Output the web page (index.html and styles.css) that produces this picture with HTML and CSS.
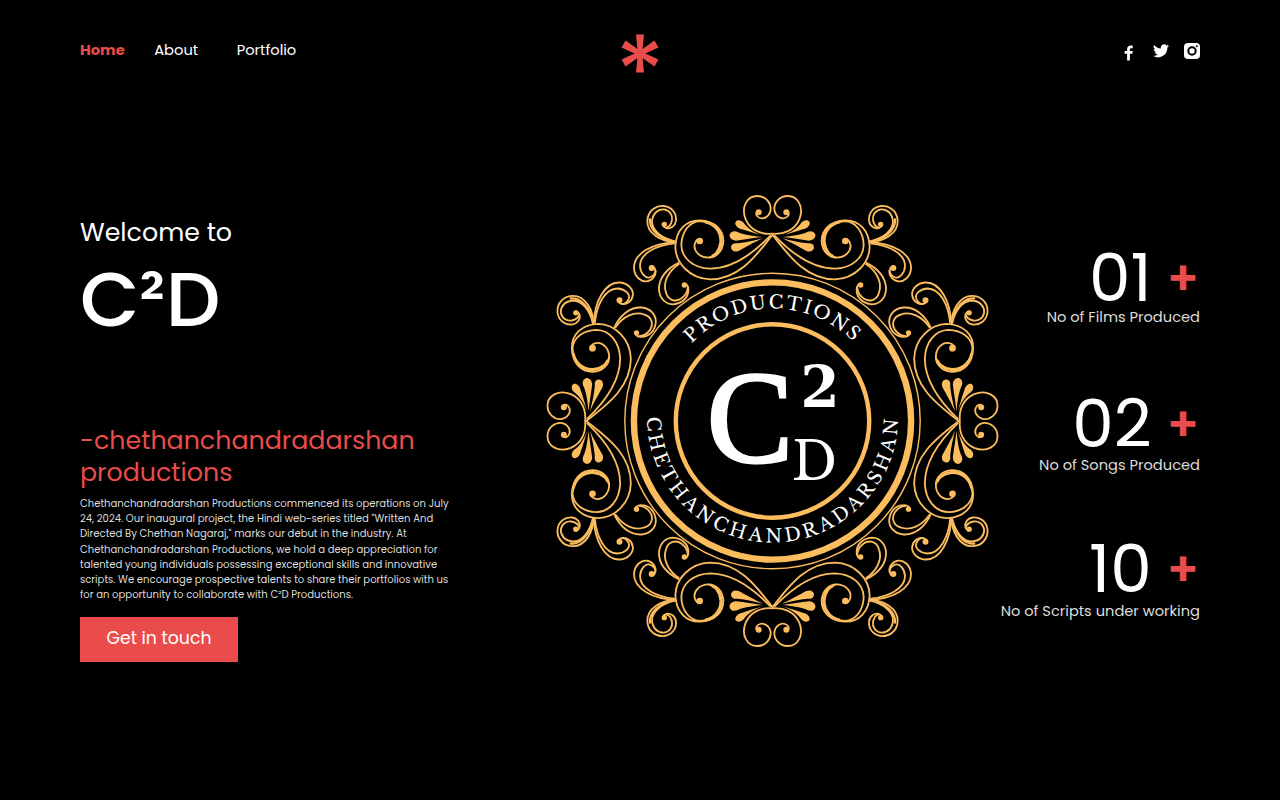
FILE: index.html
```html
<!DOCTYPE html>
<html lang="en">
<head>
<meta charset="utf-8">
<title>C²D Productions</title>
<link rel="stylesheet" href="styles.css">
</head>
<body>
<header class="header">
  <nav class="nav">
    <a class="nav-link active">Home</a>
    <a class="nav-link">About</a>
    <a class="nav-link">Portfolio</a>
  </nav>
  <svg class="mark" viewBox="0 0 38 40" width="38" height="40">
    <g fill="#ea4c4c" transform="translate(19 19.500)">
      <path id="ray" d="M-4-19H4L2.200 0H-2.200Z"/>
      <use href="#ray" transform="rotate(60)"/><use href="#ray" transform="rotate(120)"/>
      <use href="#ray" transform="rotate(180)"/><use href="#ray" transform="rotate(240)"/>
      <use href="#ray" transform="rotate(300)"/>
    </g>
  </svg>
  <div class="social">
    <svg class="facebook" width="10" height="16" viewBox="0 0 10 16"><path fill="#fff" d="M3.100 15.600V8.800H.6V6h2.500V4.200C3.100 1.800 4.600.6 6.800.6c.8 0 1.500.1 1.900.2v2.500H7.300c-1.200 0-1.400.6-1.400 1.400V6h2.800l-.4 2.800H5.900v6.800z"/></svg>
    <svg width="16" height="14" viewBox="0 0 24 20"><path fill="#fff" d="M24 2.400a10 10 0 0 1-2.800.8A5 5 0 0 0 23.300.4a10 10 0 0 1-3.100 1.200 4.900 4.900 0 0 0-8.400 4.500A14 14 0 0 1 1.700.9a4.900 4.900 0 0 0 1.500 6.600A5 5 0 0 1 1 6.900a4.900 4.900 0 0 0 3.900 4.900 5 5 0 0 1-2.200.1 4.900 4.900 0 0 0 4.600 3.400A9.900 9.900 0 0 1 0 17.300 14 14 0 0 0 21.500 4.900 10 10 0 0 0 24 2.400z"/></svg>
    <svg width="16" height="16" viewBox="0 0 16 16"><rect width="16" height="16" rx="4" fill="#fff"/><circle cx="8" cy="8" r="3.700" fill="none" stroke="#000" stroke-width="2"/><circle cx="12.800" cy="3.200" r="1" fill="#000"/></svg>
  </div>
</header>
<main class="hero">
  <section class="intro">
    <p class="welcome">Welcome to</p>
    <h1 class="title">C²D</h1>
    <h2 class="company">-chethanchandradarshan<br>productions</h2>
    <p class="about">Chethanchandradarshan Productions commenced its operations on July<br>24, 2024. Our inaugural project, the Hindi web-series titled "Written And<br>Directed By Chethan Nagaraj," marks our debut in the industry. At<br>Chethanchandradarshan Productions, we hold a deep appreciation for<br>talented young individuals possessing exceptional skills and innovative<br>scripts. We encourage prospective talents to share their portfolios with us<br>for an opportunity to collaborate with C²D Productions.</p>
    <a class="button">Get in touch</a>
  </section>
  <svg class="emblem" viewBox="540 185 465 470" width="465" height="470">
    <defs>
      <g id="scroll" fill="none" stroke="#fbbd5e" stroke-width="5.500" transform="scale(.33333) translate(-427.500 -693)">
        <path d="M428 131C395 134 362 122 347 88C332 50 352 18 382 18C408 18 423 40 422 58C420 78 402 88 390 84C378 80 376 70 382 64"/>
        <path d="M428 134C390 180 335 268 240 268C180 266 137 220 136 170C138 120 168 90 210 91C255 93 281 120 280 155C278 185 257 203 236 203C208 203 190 182 194 163C197 150 204 146 210 149"/>
        <path d="M422 136C380 180 315 236 240 236C190 234 155 205 154 165C155 125 178 95 210 93C248 97 272 122 271 155C268 183 252 200 236 203"/>
        <path stroke-width="7" d="M225 96C258 103 275 125 275 153C273 175 262 192 245 198"/>
        <path d="M140 155C95 158 50 130 52 92C54 60 80 46 102 48C126 51 140 70 138 92C136 108 122 118 108 114C98 110 96 103 102 99"/>
        <path d="M135 154C95 145 66 122 66 94C68 70 84 57 102 58C120 61 128 76 126 90C123 105 115 112 108 113"/>
        <path stroke-width="7" stroke-linecap="round" d="M60 88C58 112 78 136 112 150"/>
        <path d="M138 157C70 158 10 190 12 235C14 262 35 276 50 274C68 272 80 255 76 240C74 230 65 228 62 231"/>
        <path d="M134 160C80 165 30 190 30 228C31 250 46 266 60 262C70 258 77 250 76 240"/>
        <path d="M148 218C110 235 85 265 87 300C90 330 110 343 130 343C155 341 175 325 175 300C176 287 168 280 162 284"/>
        <path d="M148 221C112 245 98 280 108 308C115 332 138 337 155 325C168 315 173 305 173 292"/>
        <g stroke="none" fill="#fbbd5e">
          <circle cx="386" cy="67" r="9"/><circle cx="209" cy="153" r="10"/><circle cx="103" cy="103" r="8"/><circle cx="65" cy="234" r="9"/><circle cx="163" cy="285" r="8"/>
          <path d="M400 138C375 130 353 124 337 118C320 115 313 102 317 95C323 88 334 90 341 98C350 112 370 127 400 138Z"/>
          <path d="M398 141C370 144 342 149 318 152C303 151 297 141 299 133C304 122 315 122 323 126C345 136 370 138 398 141Z"/>
          <path d="M400 145C375 155 345 173 326 183C313 188 303 181 303 172C303 162 313 158 322 160C348 158 375 151 400 145Z"/>
        </g>
      </g>
      <g id="pair"><use href="#scroll"/><use href="#scroll" transform="scale(-1 1)"/></g>
      <path id="arc-top" d="M691.500 343.500A113 113 0 0 1 855 343.500"/>
      <path id="arc-bottom" d="M647 417A125.500 125.500 0 0 0 898 417"/>
    </defs>
    <g transform="translate(772.500 421)">
      <use href="#pair"/><use href="#pair" transform="rotate(90)"/><use href="#pair" transform="rotate(180)"/><use href="#pair" transform="rotate(270)"/>
      <g stroke="#fbbd5e" fill="none"><circle r="147.700" stroke-width="1.400"/><circle r="138.600" stroke-width="6.400"/><circle r="96.700" stroke-width="4.400"/></g>
    </g>
    <g class="emblem-text">
      <text font-size="18.500"><textPath href="#arc-top" textLength="180">PRODUCTIONS</textPath></text>
      <text font-size="18.500"><textPath href="#arc-bottom" textLength="392">CHETHANCHANDRADARSHAN</textPath></text>
      <text class="emblem-initial" x="707" y="462" font-size="131" textLength="86" lengthAdjust="spacingAndGlyphs">C</text>
      <text class="emblem-digit" x="800.500" y="407" font-size="57" textLength="39" lengthAdjust="spacingAndGlyphs">2</text>
      <text x="792" y="480" font-size="54" textLength="45" lengthAdjust="spacingAndGlyphs">D</text>
    </g>
  </svg>
  <section class="stats">
    <div class="stat"><div class="figure">01<b>+</b></div><p>No of Films Produced</p></div>
    <div class="stat"><div class="figure">02<b>+</b></div><p>No of Songs Produced</p></div>
    <div class="stat"><div class="figure">10<b>+</b></div><p>No of Scripts under working</p></div>
  </section>
</main>
</body>
</html>
```
FILE: styles.css
```css
* { box-sizing: border-box; margin: 0; padding: 0; }
body { width: 1280px; height: 800px; overflow: hidden; background: #000; color: #fff; font-family: Poppins, Inter, sans-serif; }
.header { display: grid; grid-template-columns: 1fr 38px 1fr; padding: 34px 80px 0; height: 104px; }
.nav { display: flex; padding-top: 4px; font-size: 14.700px; line-height: 24px; }
.nav-link:nth-child(2) { margin-left: 29.500px; }
.nav-link:nth-child(3) { margin-left: 38.500px; }
.active { color: #ea4c4c; font-weight: 700; }
.social { display: flex; justify-content: flex-end; align-items: center; height: 34px; gap: 15px; padding-right: .5px; }
.facebook { position: relative; top: 2px; margin-right: 4px; }
.hero { display: flex; padding: 81px 80px 0; }
.intro { width: 460px; padding-top: 28px; }
.welcome { font-size: 25.300px; line-height: 38px; }
.title { margin-top: 3px; font-size: 77px; line-height: 90px; font-weight: 500; }
.company { margin-top: 80px; font-size: 25.300px; line-height: 32px; font-weight: 400; color: #ea4c4c; }
.about { margin-top: 8px; font-size: 10.070px; line-height: 15.200px; color: #ddd; white-space: nowrap; }
.button { display: flex; width: 158px; height: 45px; margin-top: 14.600px; padding-bottom: 4px; background: #ea4c4c; align-items: center; justify-content: center; font-size: 17.300px; }
.emblem { flex: none; }
.emblem-text { fill: #fff; font-family: "Libre Baskerville", "Liberation Serif", serif; }
.emblem-initial { font-family: "Liberation Serif", serif; stroke: #fff; stroke-width: 3px; }
.emblem-digit { font-family: "DejaVu Serif", serif; font-weight: 700; }
.stats { flex: 1; display: flex; flex-direction: column; align-items: flex-end; gap: 57px; padding-top: 59px; white-space: nowrap; margin-left: -20px; }
.stat { text-align: right; font-size: 14.650px; line-height: 22px; color: #ddd; }
.figure { display: flex; justify-content: flex-end; align-items: center; height: 67px; font-size: 66px; color: #fff; }
.stat p { margin-top: -5px; margin-bottom: 5px; }
.stat:nth-child(n+2) p { margin-top: -3px; margin-bottom: 2px; }
.stat:nth-child(3) p { margin-top: -2px; }
.figure b { color: #ea4c4c; font-size: 48px; font-weight: 600; margin: 2px 1px 0 15px; }
```
